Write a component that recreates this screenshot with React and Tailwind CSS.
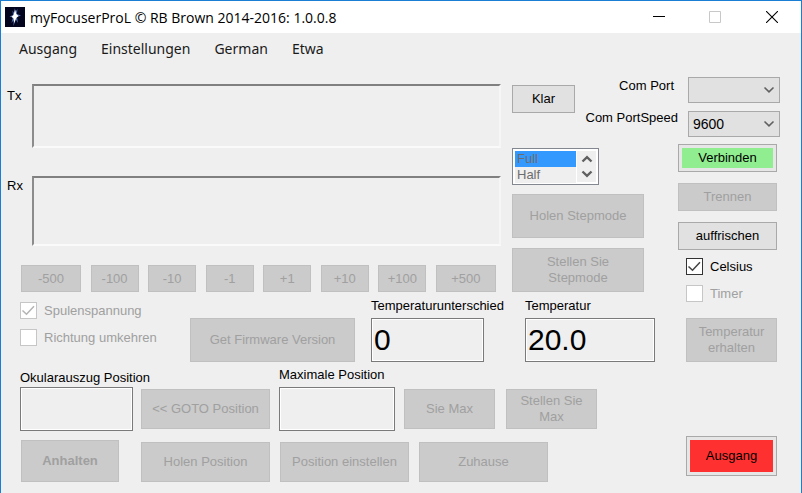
import React from "react";
import clsx from "clsx";

const steps = ["-500", "-100", "-10", "-1", "+1", "+10", "+100", "+500"];

function Button({ className, variant = "disabled", children }) {
  return (
    <button
      type="button"
      disabled={variant === "disabled"}
      className={clsx(
        "shrink-0 border px-1 text-center leading-4",
        variant === "disabled" && "border-[#c0c0c0] bg-[#cbcbcb] text-[#a0a0a0]",
        variant === "normal" && "border-[#a9a9a9] bg-[#e1e1e1] text-black",
        className
      )}
    >
      {children}
    </button>
  );
}

function ColorButton({ className, fill, children }) {
  return (
    <button type="button" className={clsx("flex shrink-0 border border-[#a9a9a9] bg-[#e6e6e6] p-[3px] leading-4 text-black", className)}>
      <span className={clsx("flex flex-1 items-center justify-center self-stretch", fill)}>{children}</span>
    </button>
  );
}

function Chevron({ up, className }) {
  return (
    <svg viewBox="0 0 12 8" className={clsx("h-2 w-3", className)} fill="none" stroke="#606060">
      <path d={up ? "M1.5 6.5 6 2.2l4.5 4.3" : "M1.5 1.5 6 5.8l4.5-4.3"} />
    </svg>
  );
}

function Combo({ id, options, className }) {
  return (
    <div className={clsx("grid h-[26px] w-[92px] self-end", className)}>
      <select id={id} className="appearance-none border border-[#a9a9a9] bg-[#e1e1e1] pl-1 text-[14px] leading-4 text-black [grid-area:1/1]">
        {options.map((o) => (
          <option key={o}>{o}</option>
        ))}
      </select>
      <Chevron className="pointer-events-none mr-[5px] self-center justify-self-end stroke-[1.6] [grid-area:1/1]" />
    </div>
  );
}

function Check({ label, checked, disabled }) {
  return (
    <label className={clsx("flex h-[17px] items-center gap-[7px] whitespace-nowrap", disabled ? "text-[#a0a0a0]" : "text-black")}>
      <span className="grid size-[17px]">
        <input
          type="checkbox"
          defaultChecked={checked}
          disabled={disabled}
          className={clsx("peer size-[17px] appearance-none border bg-white [grid-area:1/1]", disabled ? "border-[#c6c6c6]" : "border-[#333]")}
        />
        <svg
          viewBox="0 0 17 17"
          className="pointer-events-none hidden size-[17px] [grid-area:1/1] peer-checked:block"
          fill="none"
          stroke={disabled ? "#b4b4b4" : "#444"}
          strokeWidth="1.5"
        >
          <path d="M2.5 8.5 6.5 12.2 14 4.2" />
        </svg>
      </span>
      {label}
    </label>
  );
}

function Field({ id, label, value, className, width }) {
  return (
    <div className={clsx("flex shrink-0 flex-col whitespace-nowrap", className)}>
      <label htmlFor={id} className="leading-4">{label}</label>
      <input
        id={id}
        readOnly
        defaultValue={value}
        className={clsx("h-11 border border-[#7a7a7a] bg-[#efefef] pl-[2px] text-[30px] leading-9 text-black outline-1 -outline-offset-2 outline-white", width)}
      />
    </div>
  );
}

const logClass =
  "min-w-0 flex-1 resize-none border-2 border-t-[#808080] border-l-[#8c8c8c] border-r-[#f6f6f6] border-b-[#fafafa] bg-[#efefef]";

export default function App() {
  return (
    <div className="flex min-h-screen flex-col border-x border-t border-[#1a7fd4] bg-[#efefef] font-['Liberation_Sans',Arial,sans-serif] text-[13px] text-black">
      <header className="flex h-8 items-center bg-white pl-1 font-['Open_Sans','Noto_Sans',sans-serif]">
        <svg viewBox="0 0 20 20" className="size-5 shrink-0">
          <rect width="20" height="20" fill="#03051f" />
          <path d="M9.5 1 10.3 5 12.5 2 11.8 7 16 8.5 12 10 13 16 10.8 12.5 8.5 19 8.6 13 6.5 16 7.8 10.5 4.5 9.5 8 8 7.5 3.5 9 6z" fill="#6f93dc" opacity=".75" />
          <path d="M10.2 2.5 11.2 7 13.5 9 11.2 11 9.2 16 8.6 11.5 6.5 9.8 8.6 8z" fill="#fff" />
        </svg>
        <h1 className="flex-1 pl-[5px] text-[14px]">myFocuserProL © RB Brown 2014-2016: 1.0.0.8</h1>
        <div className="flex h-full">
          <button type="button" aria-label="Minimize" className="flex w-14 items-center justify-center">
            <svg viewBox="0 0 12 12" className="size-3" stroke="#000"><path d="M0 5.5h12" /></svg>
          </button>
          <button type="button" aria-label="Maximize" disabled className="flex w-14 items-center justify-center">
            <svg viewBox="0 0 12 12" className="size-3" fill="none" stroke="#c8c8c8"><path d="M.5.5h11v11H.5z" /></svg>
          </button>
          <button type="button" aria-label="Close" className="flex w-[58px] items-center justify-center">
            <svg viewBox="0 0 12 12" className="size-3" stroke="#000" strokeWidth="1.1"><path d="M0 0l12 12M12 0 0 12" /></svg>
          </button>
        </div>
      </header>

      <nav className="flex h-[30px] items-center gap-6 pl-[18px] font-['Noto_Sans','Open_Sans',sans-serif] text-[14px] text-[#1a1a1a]">
        <button type="button">Ausgang</button>
        <button type="button">Einstellungen</button>
        <button type="button">German</button>
        <button type="button">Etwa</button>
      </nav>

      <main className="flex flex-1">
        <div className="flex min-w-0 flex-1 flex-col pl-[6px]">
          <div className="flex gap-[11px]">
            <div className="flex min-w-0 flex-1 flex-col pt-[21px]">
              <div className="flex h-16">
                <label htmlFor="tx" className="w-[25px] pt-1 leading-4">Tx</label>
                <textarea id="tx" readOnly className={logClass} />
              </div>
              <div className="mt-7 flex h-[70px]">
                <label htmlFor="rx" className="w-[25px] pt-[2px] leading-4">Rx</label>
                <textarea id="rx" readOnly className={logClass} />
              </div>
              <div className="mt-[19px] mr-[5px] ml-[14px] flex justify-between">
                {steps.map((s, i) => (
                  <Button key={s} className={clsx("h-[27px]", i === 0 || i === 7 ? "w-[60px]" : "w-12")}>{s}</Button>
                ))}
              </div>
            </div>

            <div className="flex w-[166px] shrink-0 flex-col pt-[14px]">
              <div className="flex items-start justify-between">
                <Button variant="normal" className="mt-2 h-7 w-[63px]">Klar</Button>
                <div className="flex flex-col items-end gap-[14px] leading-[18px] whitespace-nowrap">
                  <label htmlFor="port" className="pr-1">Com Port</label>
                  <label htmlFor="speed">Com PortSpeed</label>
                </div>
              </div>
              <div className="mt-[21px] flex h-[37px] w-[87px] border border-[#828790] bg-white p-[2px]">
                <select
                  aria-label="Stepmode"
                  size={2}
                  defaultValue="Full"
                  className="h-8 w-[61px] appearance-none overflow-hidden bg-[#efefef] text-[13px] leading-4 text-[#6d6d6d] outline-none"
                >
                  <option className="h-4 min-h-4 bg-linear-to-r p-0 pl-[2px] leading-4 checked:from-[#3399ff] checked:to-[#3399ff] [-webkit-text-fill-color:#6d6d6d]">Full</option>
                  <option className="h-4 min-h-4 p-0 pl-[2px] leading-4 [-webkit-text-fill-color:#6d6d6d]">Half</option>
                </select>
                <div className="ml-px flex flex-1 flex-col items-center justify-around bg-[#efefef]">
                  <Chevron up className="stroke-[2.4]" />
                  <Chevron className="stroke-[2.4]" />
                </div>
              </div>
              <Button className="mt-[9px] h-11 w-[132px]">Holen Stepmode</Button>
              <Button className="mt-[10px] h-11 w-[132px]">Stellen Sie<br />Stepmode</Button>
            </div>
          </div>

          <div className="mt-[6px] flex items-end pl-[13px]">
            <div className="flex w-[170px] shrink-0 flex-col gap-[10px] pb-4">
              <Check label="Spulenspannung" checked disabled />
              <Check label="Richtung umkehren" disabled />
            </div>
            <Button className="h-11 w-[165px]">Get Firmware Version</Button>
            <Field id="diff" label="Temperaturunterschied" value="0" className="ml-4 w-[154px] gap-1" width="w-[113px]" />
            <Field id="temp" label="Temperatur" value="20.0" className="gap-1" width="w-[130px]" />
          </div>

          <div className="mt-[5px] flex items-end pl-[13px]">
            <Field id="pos" label="Okularauszug Position" className="w-[113px] gap-px" width="w-[113px]" />
            <Button className="mb-[2px] ml-2 h-10 w-[129px]">&lt;&lt; GOTO Position</Button>
            <Field id="max" label="Maximale Position" className="ml-[9px] w-[116px] gap-1" width="w-[116px]" />
            <Button className="mb-[2px] ml-[9px] h-10 w-[91px]">Sie Max</Button>
            <Button className="mb-[2px] ml-[11px] h-10 w-[91px]">Stellen Sie<br />Max</Button>
          </div>

          <div className="mt-[9px] flex items-end gap-[10px] pl-[14px]">
            <Button className="mr-3 h-[42px] w-[98px] font-bold">Anhalten</Button>
            <Button className="h-10 w-[129px]">Holen Position</Button>
            <Button className="h-10 w-[129px]">Position einstellen</Button>
            <Button className="h-10 w-[129px]">Zuhause</Button>
          </div>
        </div>

        <div className="mr-[21px] flex w-[102px] shrink-0 flex-col pt-[14px]">
          <Combo id="port" options={[""]} />
          <Combo id="speed" options={["9600"]} className="mt-2" />
          <ColorButton className="mt-[7px] h-7 w-[99px]" fill="bg-[#90ee90]">Verbinden</ColorButton>
          <Button className="mt-[11px] h-7 w-[99px]">Trennen</Button>
          <Button variant="normal" className="mt-[11px] h-7 w-[99px]">auffrischen</Button>
          <div className="flex flex-col gap-[10px] pt-2 pl-2">
            <Check label="Celsius" checked />
            <Check label="Timer" disabled />
          </div>
          <Button className="mt-4 ml-2 h-11 w-[91px]">Temperatur<br />erhalten</Button>
          <ColorButton className="mt-[74px] ml-2 h-10 w-[91px]" fill="bg-[#ff3030]">Ausgang</ColorButton>
        </div>
      </main>
    </div>
  );
}
